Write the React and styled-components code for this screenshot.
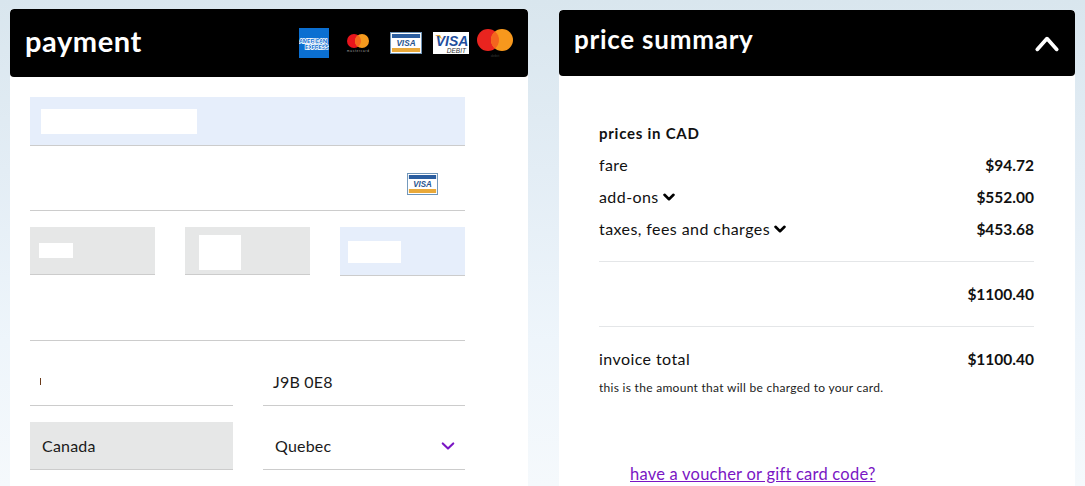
import React from "react";
import styled, { createGlobalStyle } from "styled-components";

const FONT = `"Lato", "Noto Sans", "Liberation Sans", sans-serif`;

const Global = createGlobalStyle`
  html, body { margin: 0; padding: 0; }
  body {
    width: 1085px;
    height: 486px;
    overflow: hidden;
    font-family: ${FONT};
    color: #111;
    background: linear-gradient(180deg, #d9e6ee 0%, #e3edf5 35%, #eef5fb 70%, #f5f9fc 100%);
  }
`;

const Page = styled.div`
  display: flex;
  align-items: flex-start;
  gap: 31px;
  padding: 9px 10px 0;
  height: 486px;
  box-sizing: border-box;
`;

const Panel = styled.section`
  width: ${p => p.$width}px;
  height: ${p => p.$height}px;
  margin-top: ${p => p.$top || 0}px;
  flex: none;
  background: #fff;
  border-radius: 4px 4px 0 0;
  overflow: hidden;
`;

const PanelHeader = styled.header`
  height: ${p => p.$height}px;
  background: #000;
  color: #fff;
  display: flex;
  align-items: center;
  justify-content: space-between;
  box-sizing: border-box;
  padding: ${p => p.$padding};
  border-radius: 4px;
`;

const Title = styled.h2`
  margin: ${p => p.$margin};
  font-size: ${p => p.$size}px;
  font-weight: 700;
  letter-spacing: ${p => p.$spacing}px;
  line-height: 1;
  font-family: ${FONT};
`;

const Cards = styled.div`
  display: flex;
  align-items: center;
`;

const CardSlot = styled.span`
  display: block;
  margin-left: ${p => p.$gap || 0}px;
  line-height: 0;
`;

const Form = styled.div`
  width: 435px;
  margin-left: 20px;
  padding-top: 20px;
  display: flex;
  flex-direction: column;
`;

const Row = styled.div`
  display: grid;
  grid-template-columns: ${p => p.$cols};
  column-gap: 30px;
  margin-top: ${p => p.$top || 0}px;
`;

const bg = { blue: "#e6eefb", grey: "#e6e7e7", none: "transparent" };

const Field = styled.div`
  height: ${p => p.$h}px;
  box-sizing: border-box;
  background: ${p => bg[p.$tone || "none"]};
  border-bottom: 1px solid #cccccc;
  display: flex;
  align-items: center;
  justify-content: space-between;
  padding: ${p => p.$pad || "0 12px"};
  font-size: 16px;
  color: #1a1a1a;
`;

const Mask = styled.span`
  display: block;
  background: #fff;
  width: ${p => p.$w}px;
  height: ${p => p.$h}px;
`;

const Value = styled.span`
  letter-spacing: .2px;
`;

const Tick = styled.span`
  display: block;
  width: 1px;
  height: 7px;
  background: #6b3a1a;
  margin-left: -1px;
`;

const SummaryBody = styled.div`
  padding: 47px 41px 0 40px;
  display: flex;
  flex-direction: column;
`;

const Caption = styled.div`
  font-size: 15px;
  font-weight: 700;
  line-height: 20px;
  margin-bottom: 5px;
  letter-spacing: .75px;
`;

const Line = styled.div`
  display: flex;
  align-items: center;
  justify-content: space-between;
  height: 32px;
  font-size: 16px;
`;

const Label = styled.span`
  display: inline-flex;
  align-items: center;
  gap: 4px;
  letter-spacing: .42px;
`;

const ChevronSlot = styled.span`
  display: block;
  margin-top: 2px;
  line-height: 0;
`;

const HeaderToggle = styled.span`
  display: block;
  margin-top: 10px;
  line-height: 0;
`;

const Amount = styled.span`
  padding-top: 2px;
  font-size: 15.5px;
  font-weight: 700;
`;

const Divider = styled.hr`
  border: 0;
  border-top: 1px solid #e4e6e8;
  margin: 17px 0 15px;
`;

const Note = styled.p`
  margin: 6px 0 0;
  font-size: 12px;
  line-height: 16px;
  letter-spacing: .29px;
  color: #222;
`;

const VoucherLink = styled.a`
  display: block;
  margin: 68px 0 0 31px;
  font-size: 16.5px;
  line-height: 20px;
  color: #7a16c4;
  text-decoration: underline;
  letter-spacing: .23px;
`;

const Chevron = ({ size = 12, color = "#000", width = 2.6, up }) => (
  <svg width={size} height={size} viewBox="0 0 12 12" fill="none" style={{ display: "block" }}>
    <path d={up ? "M1.5 8.5 6 3.5l4.5 5" : "M1.5 3.8 6 8.2l4.5-4.4"} stroke={color} strokeWidth={width} strokeLinecap="round" strokeLinejoin="round" />
  </svg>
);

const Amex = () => (
  <svg width="30" height="30" viewBox="0 0 30 30">
    <rect width="30" height="30" fill="#0b6fd1" />
    <text x="0" y="15" fontSize="6" fontWeight="700" fontFamily="Liberation Sans" fill="#0b6fd1" stroke="#fff" strokeWidth="1.3" paintOrder="stroke" textLength="28">AMERICAN</text>
    <text x="6" y="21" fontSize="6" fontWeight="700" fontFamily="Liberation Sans" fill="#0b6fd1" stroke="#fff" strokeWidth="1.3" paintOrder="stroke" textLength="24">EXPRESS</text>
  </svg>
);

const MasterSmall = () => (
  <svg width="24" height="22" viewBox="0 0 24 22">
    <circle cx="8" cy="9" r="7" fill="#e8141c" />
    <circle cx="16" cy="9" r="7" fill="#f59a1e" />
    <path d="M12 3.3a7 7 0 0 1 0 11.4 7 7 0 0 1 0-11.4z" fill="#f4661c" />
    <text x="1" y="20" fontSize="3" fontFamily="Liberation Sans" fill="#aaa" textLength="22">mastercard</text>
  </svg>
);

const VisaCard = ({ w = 32, h = 22 }) => (
  <svg width={w} height={h} viewBox="0 0 33 22" preserveAspectRatio="none">
    <rect x=".5" y=".5" width="32" height="21" fill="#fff" stroke="#6d94b8" />
    <rect x="2" y="2" width="29" height="4" fill="#2a5d9f" />
    <rect x="2" y="16" width="29" height="4" fill="#e9a93a" />
    <text x="16.5" y="14" textAnchor="middle" fontSize="8.5" fontStyle="italic" fontWeight="700" fontFamily="Liberation Sans" fill="#27548f">VISA</text>
  </svg>
);

const VisaDebit = () => (
  <svg width="36" height="22" viewBox="0 0 36 22">
    <rect width="36" height="22" fill="#fff" />
    <path d="M2 3h5l2 4z" fill="#e9a93a" />
    <text x="19" y="13.5" textAnchor="middle" fontSize="14" fontStyle="italic" fontWeight="700" fontFamily="Liberation Sans" fill="#1f4f9e">VISA</text>
    <text x="33" y="20.5" textAnchor="end" fontSize="6.5" fontStyle="italic" fontFamily="Liberation Sans" fill="#333">DEBIT</text>
  </svg>
);

const MasterLarge = () => (
  <svg width="36" height="30" viewBox="0 0 36 30">
    <circle cx="11" cy="12" r="11" fill="#e9241f" />
    <circle cx="25" cy="12" r="11" fill="#f7981d" />
    <path d="M18 3.5a11 11 0 0 1 0 17 11 11 0 0 1 0-17z" fill="#f4651e" />
    <text x="18" y="29" textAnchor="middle" fontSize="4" fontFamily="Liberation Sans" fill="#333">debit</text>
  </svg>
);

export default function App() {
  return (
    <>
      <Global />
      <Page>
        <Panel $width={518} $height={477}>
          <PanelHeader $height={68} $padding="0 15px 0 15px">
            <Title $size={29} $spacing={0.6} $margin="-5px 0 0">payment</Title>
            <Cards>
              <CardSlot><Amex /></CardSlot>
              <CardSlot $gap={17}><MasterSmall /></CardSlot>
              <CardSlot $gap={20}><VisaCard /></CardSlot>
              <CardSlot $gap={11}><VisaDebit /></CardSlot>
              <CardSlot $gap={8}><MasterLarge /></CardSlot>
            </Cards>
          </PanelHeader>
          <Form>
            <Field $h={49} $tone="blue" $pad="0 11px">
              <Mask $w={156} $h={25} />
            </Field>
            <Field $h={65} $pad="12px 27px 0 0">
              <span />
              <VisaCard w={31} h={22} />
            </Field>
            <Row $cols="125px 125px 125px" $top={16}>
              <Field $h={48} $tone="grey" $pad="0 9px">
                <Mask $w={34} $h={15} />
              </Field>
              <Field $h={48} $tone="grey" $pad="4px 14px 0">
                <Mask $w={42} $h={35} />
              </Field>
              <Field $h={49} $tone="blue" $pad="2px 8px 0">
                <Mask $w={53} $h={22} />
              </Field>
            </Row>
            <Field $h={65} />
            <Row $cols="203px 202px" $top={0}>
              <Field $h={65} $pad="17px 11px 0">
                <Tick />
              </Field>
              <Field $h={65} $pad="16px 10px 0">
                <Value>J9B 0E8</Value>
              </Field>
            </Row>
            <Row $cols="203px 202px" $top={16}>
              <Field $h={48} $tone="grey" $pad="0 12px">
                <Value>Canada</Value>
              </Field>
              <Field $h={48} $pad="0 10px 0 12px">
                <Value>Quebec</Value>
                <Chevron size={14} color="#7a16c4" width={1.8} />
              </Field>
            </Row>
          </Form>
        </Panel>
        <Panel $width={516} $height={476} $top={1}>
          <PanelHeader $height={66} $padding="0 15px 8px 15px">
            <Title $size={26} $spacing={0.75} $margin="0">price summary</Title>
            <HeaderToggle>
              <Chevron size={26} color="#fff" width={1.7} up />
            </HeaderToggle>
          </PanelHeader>
          <SummaryBody>
            <Caption>prices in CAD</Caption>
            <Line>
              <Label>fare</Label>
              <Amount>$94.72</Amount>
            </Line>
            <Line>
              <Label>add-ons <ChevronSlot><Chevron /></ChevronSlot></Label>
              <Amount>$552.00</Amount>
            </Line>
            <Line>
              <Label>taxes, fees and charges <ChevronSlot><Chevron /></ChevronSlot></Label>
              <Amount>$453.68</Amount>
            </Line>
            <Divider />
            <Line>
              <span />
              <Amount>$1100.40</Amount>
            </Line>
            <Divider />
            <Line>
              <Label>invoice total</Label>
              <Amount>$1100.40</Amount>
            </Line>
            <Note>this is the amount that will be charged to your card.</Note>
            <VoucherLink href="#">have a voucher or gift card code?</VoucherLink>
          </SummaryBody>
        </Panel>
      </Page>
    </>
  );
}
